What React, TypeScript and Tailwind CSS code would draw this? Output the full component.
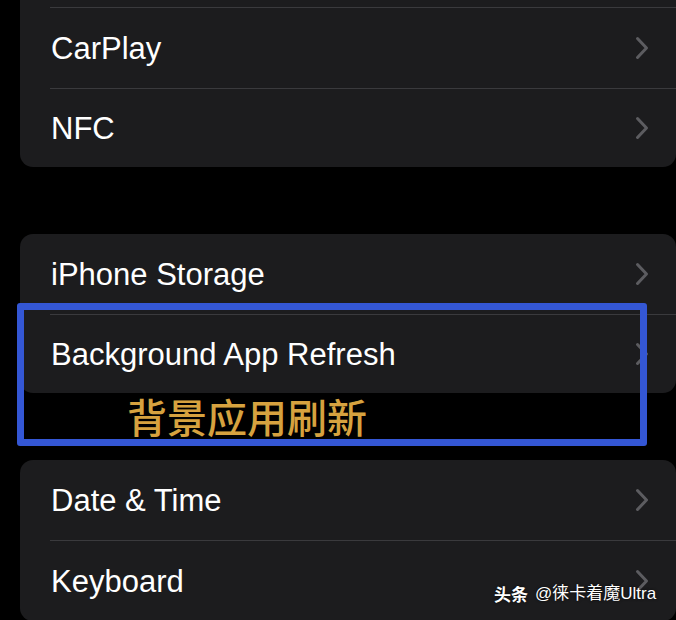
import { ReactNode } from "react";

const Chevron = () => (
  <svg width="14" height="24" viewBox="0 0 14 24" fill="none">
    <polyline
      points="2.5,2.5 11.5,12 2.5,21.5"
      stroke="#5c5c60"
      strokeWidth="3"
      strokeLinecap="round"
      strokeLinejoin="round"
    />
  </svg>
);

const Row = ({ label, divider, last }: { label?: string; divider?: boolean; last?: boolean }) => (
  <div>
    {divider && <div className="ml-[30px] h-px bg-[#3a3a3d]" />}
    <div
      className={`flex items-center justify-between pl-[31px] pr-[27px] ${last ? "h-[78px]" : "h-[80px]"}`}
    >
      <span className="text-[31px] leading-none text-white">{label}</span>
      {label && <Chevron />}
    </div>
  </div>
);

const Card = ({ children, className = "" }: { children: ReactNode; className?: string }) => (
  <div className={`ml-[20px] overflow-hidden rounded-[13px] bg-[#1c1c1e] ${className}`}>
    {children}
  </div>
);

export default function App() {
  return (
    <div className="relative h-[620px] w-[676px] overflow-hidden bg-black font-['Liberation_Sans','Noto_Sans_CJK_SC',sans-serif]">
      <div className="flex flex-col">
        <Card className="-mt-[73px]">
          <Row />
          <Row label="CarPlay" divider />
          <Row label="NFC" divider last />
        </Card>

        <Card className="mt-[67px]">
          <Row label="iPhone Storage" />
          <Row label="Background App Refresh" divider last />
        </Card>

        <Card className="mt-[67px]">
          <Row label="Date & Time" />
          <Row label="Keyboard" divider />
        </Card>
      </div>

      {/* annotation */}
      <div className="absolute left-[17px] top-[303px] h-[143px] w-[630px] rounded-[3px] border-[7px] border-[#3457d5]" />
      <div className="absolute left-[127px] top-[396px] font-['Noto_Sans_CJK_SC',sans-serif] text-[40px] font-medium leading-none text-[#d6a23f]">
        背景应用刷新
      </div>

      {/* watermark */}
      <div className="absolute left-[494px] top-[585px] flex items-center gap-[7px] font-['Noto_Sans_CJK_SC',sans-serif] text-[17px] leading-none text-white [text-shadow:0_0_3px_rgba(0,0,0,0.8)]">
        <span className="font-bold">头条</span>
        <span className="font-['Liberation_Sans','Noto_Sans_CJK_SC',sans-serif]">@徕卡着魔Ultra</span>
      </div>
    </div>
  );
}
